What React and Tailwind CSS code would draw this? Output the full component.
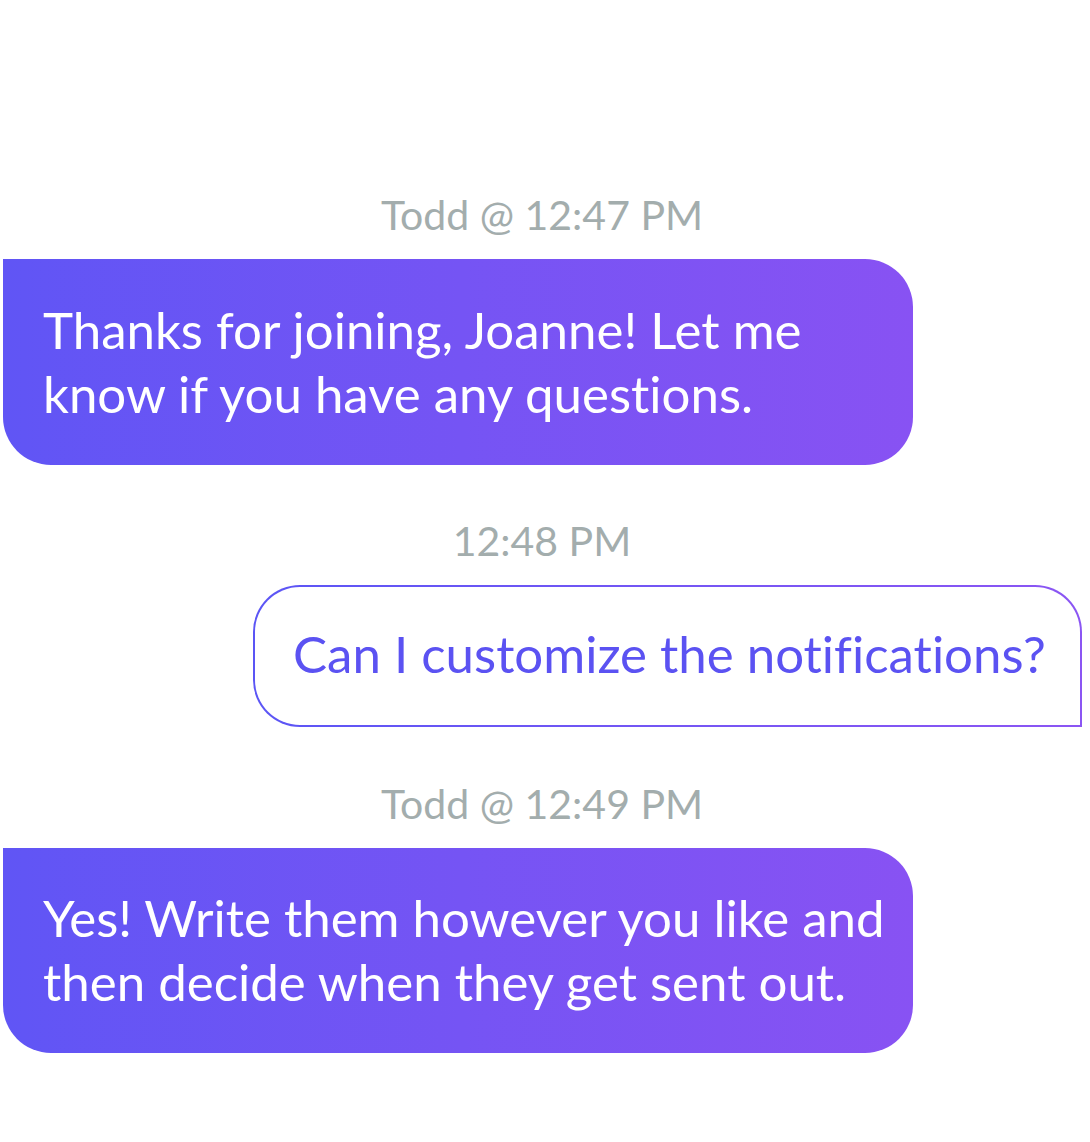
export default function App() {
  const font = { fontFamily: "Lato, 'Noto Sans', sans-serif" };
  return (
    <div className="w-[1090px] h-[1142px] bg-white overflow-hidden pt-[194px] [font-variant-ligatures:none]" style={font}>
      {/* Message 1 */}
      <div className="flex flex-col">
        <div className="pr-[6px] text-center text-[41px] leading-[41px] text-[#a3adad] whitespace-nowrap">
          Todd @ 12:47 PM
        </div>
        <div className="mt-[24px] ml-[3px] w-[910px] rounded-tr-[48px] rounded-br-[48px] rounded-bl-[48px] bg-gradient-to-r from-[#6055f5] to-[#8852f3] pl-[40px] pr-[20px] pt-[39px] pb-[39px] text-white text-[51px] leading-[64px] whitespace-nowrap">
          Thanks for joining, Joanne! Let me
          <br />
          know if you have any questions.
        </div>
      </div>

      {/* Message 2 */}
      <div className="mt-[55px] flex flex-col">
        <div className="pr-[6px] text-center text-[41px] leading-[41px] text-[#a3adad] whitespace-nowrap">
          12:48 PM
        </div>
        <div className="mt-[24px] ml-[253px] w-[829px] rounded-tl-[47px] rounded-tr-[47px] rounded-bl-[47px] bg-gradient-to-r from-[#5b55f5] to-[#8b55f3] p-[2px]">
          <div className="rounded-tl-[45px] rounded-tr-[45px] rounded-bl-[45px] bg-white pl-[38px] pt-[35px] pb-[39px] text-[#5b52f2] text-[51px] leading-[64px] whitespace-nowrap">
            Can I customize the notifications?
          </div>
        </div>
      </div>

      {/* Message 3 */}
      <div className="mt-[56px] flex flex-col">
        <div className="pr-[6px] text-center text-[41px] leading-[41px] text-[#a3adad] whitespace-nowrap">
          Todd @ 12:49 PM
        </div>
        <div className="mt-[24px] ml-[3px] w-[910px] rounded-tr-[48px] rounded-br-[48px] rounded-bl-[48px] bg-gradient-to-r from-[#6055f5] to-[#8852f3] pl-[40px] pr-[20px] pt-[38px] pb-[39px] text-white text-[51px] leading-[64px] whitespace-nowrap">
          Yes! Write them however you like and
          <br />
          then decide when they get sent out.
        </div>
      </div>
    </div>
  );
}
